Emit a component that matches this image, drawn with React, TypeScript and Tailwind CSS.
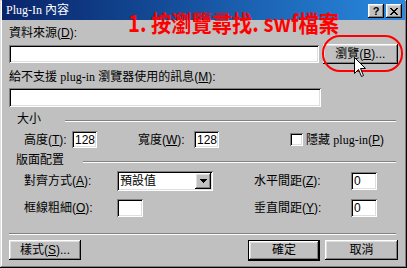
import React from "react";

const sunken =
  "bg-white shadow-[inset_1px_1px_#808080,inset_-1px_-1px_#ffffff,inset_2px_2px_#000000,inset_-2px_-2px_#dfdfdf]";
const raised =
  "bg-[#c0c0c0] shadow-[inset_-1px_-1px_#000000,inset_1px_1px_#ffffff,inset_-2px_-2px_#808080,inset_2px_2px_#dfdfdf]";
const font = { fontFamily: '"Liberation Sans","Noto Sans CJK TC",sans-serif' };
const serif = { fontFamily: '"Liberation Serif","Noto Sans CJK TC",serif' };

function Groove({ className = "" }: { className?: string }) {
  return <div className={"h-0 border-t border-b border-t-[#808080] border-b-white " + className} />;
}

function Field({ w, h = 18, value }: { w: number; h?: number; value?: string }) {
  return (
    <div
      className={sunken + " flex items-center pl-[3px] text-[12px] leading-[14px] text-black"}
      style={{ width: w, height: h }}
    >
      {value}
    </div>
  );
}

export default function App() {
  return (
    <div
      className="relative w-[407px] h-[268px] bg-[#c0c0c0] overflow-hidden text-black shadow-[inset_-1px_-1px_#000000,inset_1px_1px_#dfdfdf,inset_-2px_-2px_#808080,inset_2px_2px_#ffffff]"
      style={font}
    >
      {/* Title bar */}
      <div className="mx-[2px] h-[20px] flex items-center bg-gradient-to-r from-[#0a246a] to-[#2a8ae0] pl-[4px] pr-[3px]">
        <span className="text-white text-[12px] leading-[14px]" style={serif}>
          Plug-In 內容
        </span>
        <div className="ml-auto flex gap-[2px] mt-[2px]">
          <div className={raised + " w-[16px] h-[14px] flex items-center justify-center text-[11px] font-bold leading-none"}>
            ?
          </div>
          <div className={raised + " w-[16px] h-[14px] flex items-center justify-center"}>
            <svg width="8" height="7" viewBox="0 0 8 7" shapeRendering="crispEdges">
              <path d="M0 0h2v1h-2zM6 0h2v1h-2zM1 1h2v1h-2zM5 1h2v1h-2zM2 2h4v1h-4zM3 3h2v1h-2zM2 4h4v1h-4zM1 5h2v1h-2zM5 5h2v1h-2zM0 6h2v1h-2zM6 6h2v1h-2z" fill="#000" />
            </svg>
          </div>
        </div>
      </div>

      {/* Body */}
      <div className="pl-[9px] pr-[9px] text-[12px] leading-[14px]">
        <div className="mt-[6px] h-[14px]">
          資料來源(<u>D</u>):
        </div>
        <div className="mt-[4px] flex items-center gap-[4px] h-[20px]">
          <Field w={312} h={18} />
          <div className={raised + " w-[76px] h-[20px] flex items-center justify-center"}>
            瀏覽(<u>B</u>)...
          </div>
        </div>
        <div className="mt-[6px] h-[14px]">
          給不支援 <span style={serif}>plug-in</span> 瀏覽器使用的訊息(<u>M</u>):
        </div>
        <div className="mt-[4px]">
          <Field w={312} h={19} />
        </div>

        {/* 大小 */}
        <div className="mt-[5px] flex items-center h-[14px]">
          <span className="ml-[8px]">大小</span>
          <Groove className="ml-[24px] flex-1 mr-[2px] mt-[4px]" />
        </div>
        <div className="mt-[5px] flex items-center h-[17px]">
          <span className="ml-[15px] w-[48px]">
            高度(<u>T</u>):
          </span>
          <Field w={25} h={17} value="128" />
          <span className="ml-[41px] w-[56px]">
            寬度(<u>W</u>):
          </span>
          <Field w={25} h={17} value="128" />
          <div className={sunken + " ml-[71px] w-[13px] h-[13px]"} />
          <span className="ml-[3px]">
            隱藏 <span style={serif}>plug-in</span>(<u>P</u>)
          </span>
        </div>

        {/* 版面配置 */}
        <div className="mt-[5px] flex items-center h-[14px]">
          <span className="ml-[7px]">版面配置</span>
          <Groove className="ml-[19px] flex-1 mr-[2px] mt-[4px]" />
        </div>
        <div className="mt-[4px] flex items-center h-[20px]">
          <span className="ml-[15px] w-[93px]">
            對齊方式(<u>A</u>):
          </span>
          <div className={sunken + " w-[96px] h-[20px] flex items-center pl-[3px] pr-[2px]"}>
            <span className="flex-1">預設值</span>
            <div className={raised + " w-[16px] h-[16px] flex items-center justify-center"}>
              <svg width="7" height="4" viewBox="0 0 7 4" shapeRendering="crispEdges">
                <path d="M0 0h7v1h-7zM1 1h5v1h-5zM2 2h3v1h-3zM3 3h1v1h-1z" fill="#000" />
              </svg>
            </div>
          </div>
          <span className="ml-[41px] w-[97px]">
            水平間距(<u>Z</u>):
          </span>
          <Field w={26} h={18} value="0" />
        </div>
        <div className="mt-[8px] flex items-center h-[18px]">
          <span className="ml-[15px] w-[93px]">
            框線粗細(<u>O</u>):
          </span>
          <Field w={26} h={18} />
          <span className="ml-[111px] w-[97px]">
            垂直間距(<u>Y</u>):
          </span>
          <Field w={26} h={18} value="0" />
        </div>

        <Groove className="mt-[16px] mr-[2px]" />

        <div className="mt-[5px] flex items-center h-[20px]">
          <div className={raised + " w-[72px] h-[20px] flex items-center justify-center"}>
            樣式(<u>S</u>)...
          </div>
          <div className="ml-auto w-[72px] h-[21px] border border-black flex">
            <div className={raised + " flex-1 flex items-center justify-center"}>確定</div>
          </div>
          <div className={raised + " ml-[5px] w-[73px] h-[20px] flex items-center justify-center"}>取消</div>
        </div>
      </div>

      {/* Annotation overlays */}
      <div
        className="absolute left-[128px] top-[9px] origin-left scale-x-[0.88] text-[#ff0000] text-[23px] leading-[26px] font-bold whitespace-nowrap"
        style={{ fontFamily: '"Noto Sans CJK TC","Liberation Sans",sans-serif' }}
      >
        1. 按瀏覽尋找. swf檔案
      </div>
      <div className="absolute left-[322px] top-[35px] w-[81px] h-[37px] rounded-[18px] border-2 border-[#ff0000]" />
      <svg className="absolute left-[354px] top-[57px]" width="13" height="21" viewBox="0 0 13 21">
        <path d="M0.5 0.5 L0.5 16.5 L4.5 12.5 L7.5 19.5 L9.5 18.5 L6.5 11.5 L11.5 11.5 Z" fill="#fff" stroke="#000" strokeWidth="1" />
      </svg>
    </div>
  );
}
